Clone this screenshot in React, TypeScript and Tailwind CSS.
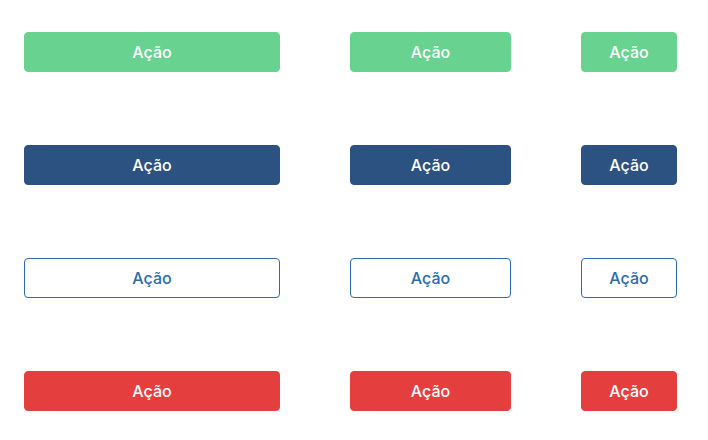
import React from 'react';

type Variant = 'success' | 'primary' | 'outline' | 'danger';

const variantClass: Record<Variant, string> = {
  success: 'bg-[#68d391] text-white border border-[#68d391]',
  primary: 'bg-[#2c5282] text-white border border-[#2c5282]',
  outline: 'bg-white text-[#2b6cb0] border border-[#2b6cb0]',
  danger: 'bg-[#e53e3e] text-white border border-[#e53e3e]',
};

const sizes = ['w-[256px]', 'w-[161px]', 'w-[96px]'];

const Button: React.FC<{ variant: Variant; width: string }> = ({ variant, width }) => (
  <button
    className={`${width} h-10 rounded-[4px] flex items-center justify-center text-base font-medium ${variantClass[variant]}`}
  >
    Ação
  </button>
);

const App: React.FC = () => {
  const variants: Variant[] = ['success', 'primary', 'outline', 'danger'];

  return (
    <div className="w-[708px] h-[440px] bg-white pt-8 pl-6 flex flex-col gap-[73px] font-['Inter',sans-serif]">
      {variants.map((v) => (
        <div key={v} className="flex gap-[70px]">
          {sizes.map((w) => (
            <Button key={w} variant={v} width={w} />
          ))}
        </div>
      ))}
    </div>
  );
};

export default App;
